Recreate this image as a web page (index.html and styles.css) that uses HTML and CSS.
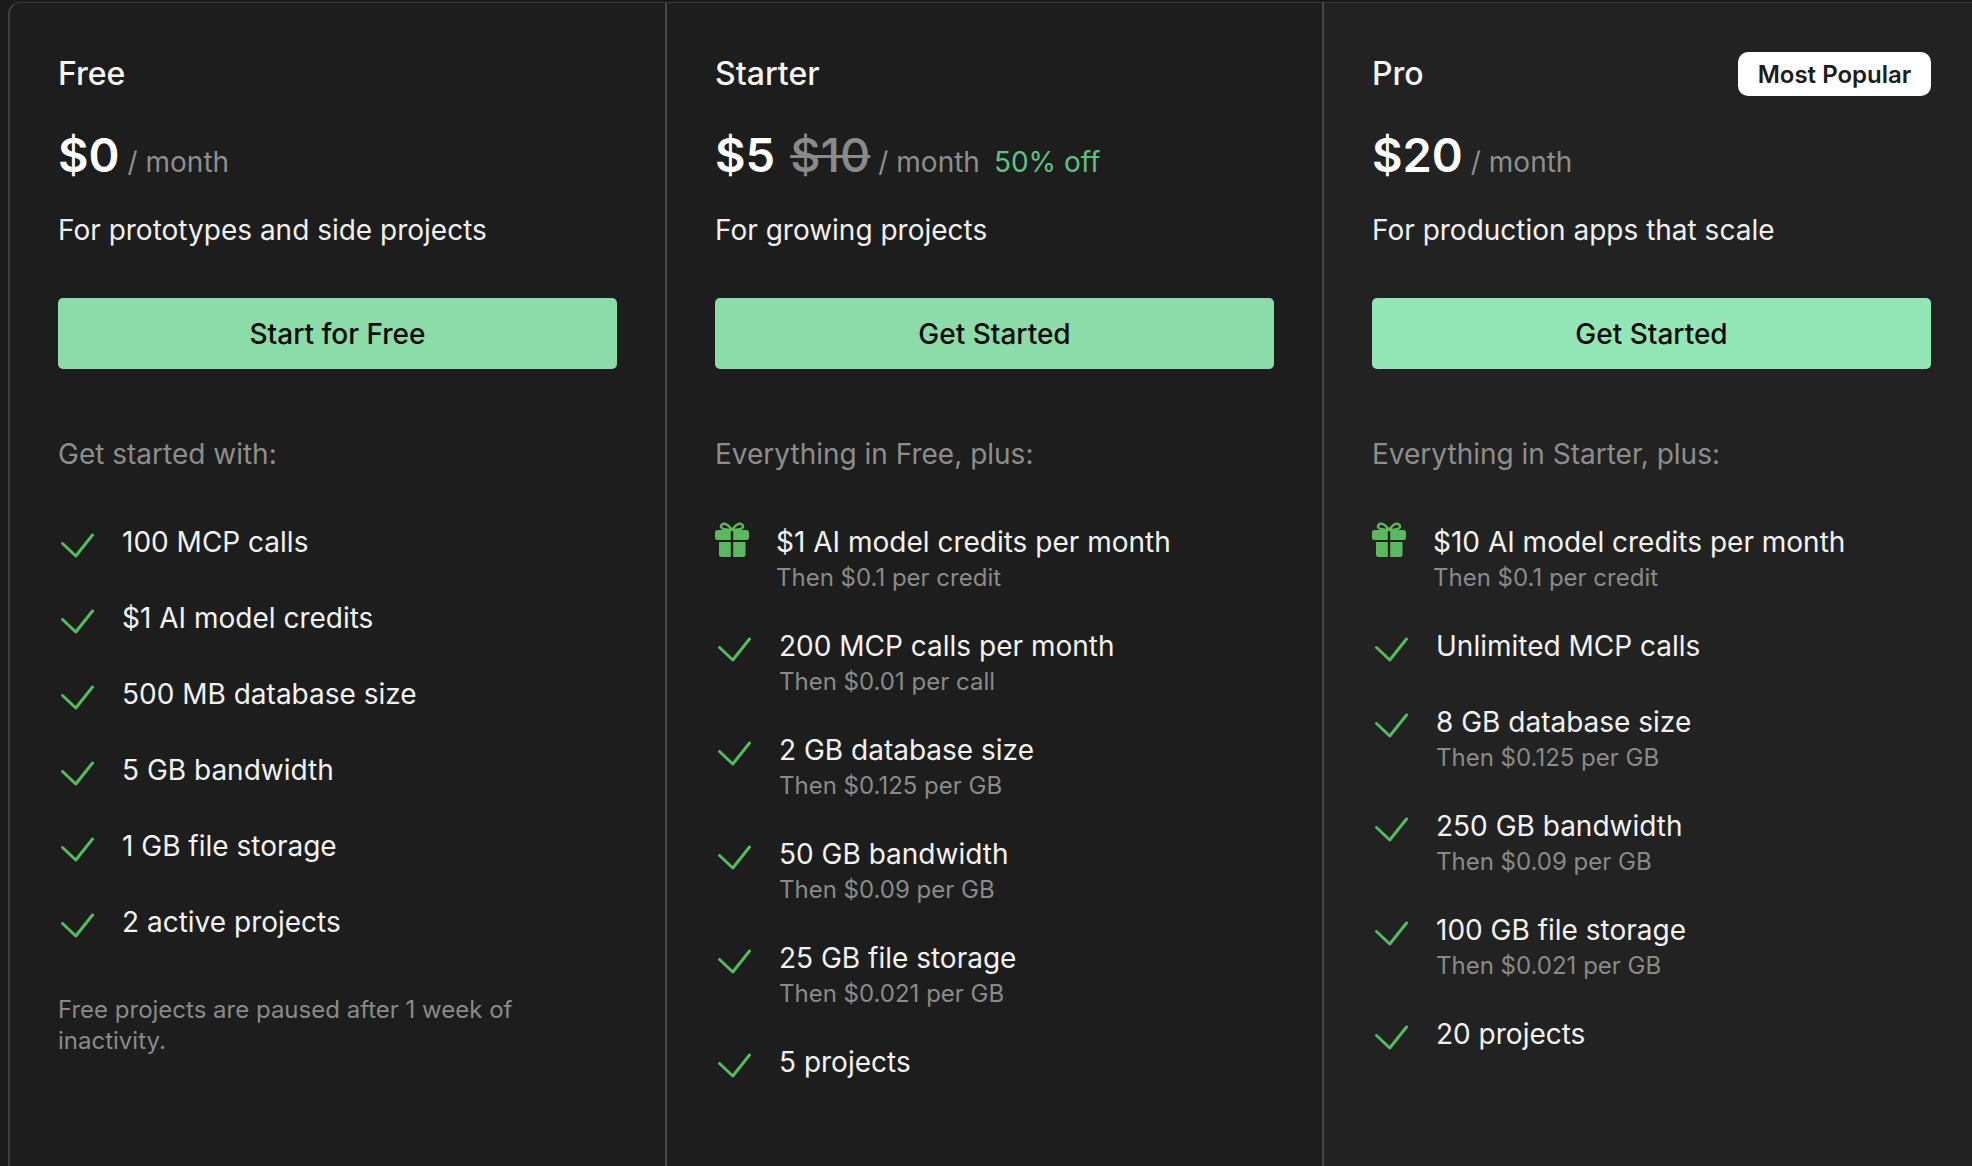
FILE: index.html
```html
<!DOCTYPE html>
<html lang="en">
<head>
<meta charset="utf-8">
<title>Pricing</title>
<link rel="stylesheet" href="styles.css">
</head>
<body>
<div class="pricing">
  <section class="plan">
    <div class="plan-head"><h2 class="plan-name">Free</h2></div>
    <div class="price-row"><span class="amount">$0</span><span class="period">/ month</span></div>
    <p class="desc">For prototypes and side projects</p>
    <button class="cta">Start for Free</button>
    <p class="label">Get started with:</p>
    <ul class="features">
      <li class="feature"><span class="icon"><svg width="36" height="40" viewBox="0 0 36 40"><path d="M4.5 21.5 L17.8 34 L34.5 13" fill="none" stroke="#52bd5a" stroke-width="3" stroke-linecap="round" stroke-linejoin="round"/></svg></span><div class="ftext"><div class="ftitle">100 MCP calls</div></div></li>
      <li class="feature"><span class="icon"><svg width="36" height="40" viewBox="0 0 36 40"><path d="M4.5 21.5 L17.8 34 L34.5 13" fill="none" stroke="#52bd5a" stroke-width="3" stroke-linecap="round" stroke-linejoin="round"/></svg></span><div class="ftext"><div class="ftitle">$1 AI model credits</div></div></li>
      <li class="feature"><span class="icon"><svg width="36" height="40" viewBox="0 0 36 40"><path d="M4.5 21.5 L17.8 34 L34.5 13" fill="none" stroke="#52bd5a" stroke-width="3" stroke-linecap="round" stroke-linejoin="round"/></svg></span><div class="ftext"><div class="ftitle">500 MB database size</div></div></li>
      <li class="feature"><span class="icon"><svg width="36" height="40" viewBox="0 0 36 40"><path d="M4.5 21.5 L17.8 34 L34.5 13" fill="none" stroke="#52bd5a" stroke-width="3" stroke-linecap="round" stroke-linejoin="round"/></svg></span><div class="ftext"><div class="ftitle">5 GB bandwidth</div></div></li>
      <li class="feature"><span class="icon"><svg width="36" height="40" viewBox="0 0 36 40"><path d="M4.5 21.5 L17.8 34 L34.5 13" fill="none" stroke="#52bd5a" stroke-width="3" stroke-linecap="round" stroke-linejoin="round"/></svg></span><div class="ftext"><div class="ftitle">1 GB file storage</div></div></li>
      <li class="feature"><span class="icon"><svg width="36" height="40" viewBox="0 0 36 40"><path d="M4.5 21.5 L17.8 34 L34.5 13" fill="none" stroke="#52bd5a" stroke-width="3" stroke-linecap="round" stroke-linejoin="round"/></svg></span><div class="ftext"><div class="ftitle">2 active projects</div></div></li>
    </ul>
    <p class="note">Free projects are paused after 1 week of inactivity.</p>
  </section>

  <section class="plan">
    <div class="plan-head"><h2 class="plan-name">Starter</h2></div>
    <div class="price-row"><span class="amount">$5</span><span class="old">$10</span><span class="period">/ month</span><span class="discount">50% off</span></div>
    <p class="desc">For growing projects</p>
    <button class="cta">Get Started</button>
    <p class="label">Everything in Free, plus:</p>
    <ul class="features">
      <li class="feature gift"><span class="icon"><svg width="34" height="40" viewBox="0 0 34 40"><g fill="#5cb85f"><path d="M2.5 8 H15.8 V18 H2.5 A2.5 2.5 0 0 1 0 15.5 V10.5 A2.5 2.5 0 0 1 2.5 8 Z"/><path d="M18.2 8 H31.5 A2.5 2.5 0 0 1 34 10.5 V15.5 A2.5 2.5 0 0 1 31.5 18 H18.2 Z"/><path d="M4 20 H15.8 V35 H6.5 A2.5 2.5 0 0 1 4 32.5 Z"/><path d="M18.2 20 H30.5 V32.5 A2.5 2.5 0 0 1 28 35 H18.2 Z"/></g><g fill="none" stroke="#5cb85f" stroke-width="2.4" stroke-linejoin="round"><path d="M17 8 C15 5.5 13 2 9.5 1.8 C7 1.7 5.5 3.5 6 5.2 C6.5 7 9 7.8 17 8"/><path d="M17 8 C19 5.5 21 2 24.5 1.8 C27 1.7 28.5 3.5 28 5.2 C27.5 7 25 7.8 17 8"/></g></svg></span><div class="ftext"><div class="ftitle">$1 AI model credits per month</div><div class="fsub">Then $0.1 per credit</div></div></li>
      <li class="feature"><span class="icon"><svg width="36" height="40" viewBox="0 0 36 40"><path d="M4.5 21.5 L17.8 34 L34.5 13" fill="none" stroke="#52bd5a" stroke-width="3" stroke-linecap="round" stroke-linejoin="round"/></svg></span><div class="ftext"><div class="ftitle">200 MCP calls per month</div><div class="fsub">Then $0.01 per call</div></div></li>
      <li class="feature"><span class="icon"><svg width="36" height="40" viewBox="0 0 36 40"><path d="M4.5 21.5 L17.8 34 L34.5 13" fill="none" stroke="#52bd5a" stroke-width="3" stroke-linecap="round" stroke-linejoin="round"/></svg></span><div class="ftext"><div class="ftitle">2 GB database size</div><div class="fsub">Then $0.125 per GB</div></div></li>
      <li class="feature"><span class="icon"><svg width="36" height="40" viewBox="0 0 36 40"><path d="M4.5 21.5 L17.8 34 L34.5 13" fill="none" stroke="#52bd5a" stroke-width="3" stroke-linecap="round" stroke-linejoin="round"/></svg></span><div class="ftext"><div class="ftitle">50 GB bandwidth</div><div class="fsub">Then $0.09 per GB</div></div></li>
      <li class="feature"><span class="icon"><svg width="36" height="40" viewBox="0 0 36 40"><path d="M4.5 21.5 L17.8 34 L34.5 13" fill="none" stroke="#52bd5a" stroke-width="3" stroke-linecap="round" stroke-linejoin="round"/></svg></span><div class="ftext"><div class="ftitle">25 GB file storage</div><div class="fsub">Then $0.021 per GB</div></div></li>
      <li class="feature"><span class="icon"><svg width="36" height="40" viewBox="0 0 36 40"><path d="M4.5 21.5 L17.8 34 L34.5 13" fill="none" stroke="#52bd5a" stroke-width="3" stroke-linecap="round" stroke-linejoin="round"/></svg></span><div class="ftext"><div class="ftitle">5 projects</div></div></li>
    </ul>
  </section>

  <section class="plan plan-pro">
    <div class="plan-head"><h2 class="plan-name">Pro</h2><span class="badge">Most Popular</span></div>
    <div class="price-row"><span class="amount">$20</span><span class="period">/ month</span></div>
    <p class="desc">For production apps that scale</p>
    <button class="cta">Get Started</button>
    <p class="label">Everything in Starter, plus:</p>
    <ul class="features">
      <li class="feature gift"><span class="icon"><svg width="34" height="40" viewBox="0 0 34 40"><g fill="#5cb85f"><path d="M2.5 8 H15.8 V18 H2.5 A2.5 2.5 0 0 1 0 15.5 V10.5 A2.5 2.5 0 0 1 2.5 8 Z"/><path d="M18.2 8 H31.5 A2.5 2.5 0 0 1 34 10.5 V15.5 A2.5 2.5 0 0 1 31.5 18 H18.2 Z"/><path d="M4 20 H15.8 V35 H6.5 A2.5 2.5 0 0 1 4 32.5 Z"/><path d="M18.2 20 H30.5 V32.5 A2.5 2.5 0 0 1 28 35 H18.2 Z"/></g><g fill="none" stroke="#5cb85f" stroke-width="2.4" stroke-linejoin="round"><path d="M17 8 C15 5.5 13 2 9.5 1.8 C7 1.7 5.5 3.5 6 5.2 C6.5 7 9 7.8 17 8"/><path d="M17 8 C19 5.5 21 2 24.5 1.8 C27 1.7 28.5 3.5 28 5.2 C27.5 7 25 7.8 17 8"/></g></svg></span><div class="ftext"><div class="ftitle">$10 AI model credits per month</div><div class="fsub">Then $0.1 per credit</div></div></li>
      <li class="feature"><span class="icon"><svg width="36" height="40" viewBox="0 0 36 40"><path d="M4.5 21.5 L17.8 34 L34.5 13" fill="none" stroke="#52bd5a" stroke-width="3" stroke-linecap="round" stroke-linejoin="round"/></svg></span><div class="ftext"><div class="ftitle">Unlimited MCP calls</div></div></li>
      <li class="feature"><span class="icon"><svg width="36" height="40" viewBox="0 0 36 40"><path d="M4.5 21.5 L17.8 34 L34.5 13" fill="none" stroke="#52bd5a" stroke-width="3" stroke-linecap="round" stroke-linejoin="round"/></svg></span><div class="ftext"><div class="ftitle">8 GB database size</div><div class="fsub">Then $0.125 per GB</div></div></li>
      <li class="feature"><span class="icon"><svg width="36" height="40" viewBox="0 0 36 40"><path d="M4.5 21.5 L17.8 34 L34.5 13" fill="none" stroke="#52bd5a" stroke-width="3" stroke-linecap="round" stroke-linejoin="round"/></svg></span><div class="ftext"><div class="ftitle">250 GB bandwidth</div><div class="fsub">Then $0.09 per GB</div></div></li>
      <li class="feature"><span class="icon"><svg width="36" height="40" viewBox="0 0 36 40"><path d="M4.5 21.5 L17.8 34 L34.5 13" fill="none" stroke="#52bd5a" stroke-width="3" stroke-linecap="round" stroke-linejoin="round"/></svg></span><div class="ftext"><div class="ftitle">100 GB file storage</div><div class="fsub">Then $0.021 per GB</div></div></li>
      <li class="feature"><span class="icon"><svg width="36" height="40" viewBox="0 0 36 40"><path d="M4.5 21.5 L17.8 34 L34.5 13" fill="none" stroke="#52bd5a" stroke-width="3" stroke-linecap="round" stroke-linejoin="round"/></svg></span><div class="ftext"><div class="ftitle">20 projects</div></div></li>
    </ul>
  </section>
</div>
</body>
</html>
```

FILE: styles.css
```css
* { box-sizing: border-box; }

html, body {
  margin: 0;
  padding: 0;
  background: #1a1a1a;
  overflow: hidden;
  height: 100%;
}

body {
  font-family: Inter, "Noto Sans", "Liberation Sans", sans-serif;
  color: #f2f2f2;
}

.pricing {
  display: grid;
  grid-template-columns: 655px 657px 657px;
  width: 1971px;
  height: 1240px;
  margin: 2px 0 0 8px;
  border-top: 1px solid #393939;
  border-left: 2px solid #404040;
  border-top-left-radius: 12px;
  background: #1d1d1d;
  overflow: hidden;
}

.plan {
  padding: 49px 48px 48px;
  display: flex;
  flex-direction: column;
}

.plan + .plan {
  border-left: 2px solid #474747;
}

.plan-pro {
  background: #222222;
}

.plan-head {
  display: flex;
  justify-content: space-between;
  align-items: center;
  height: 44px;
}

.plan-name {
  margin: 0;
  font-size: 32px;
  font-weight: 500;
  line-height: 44px;
  color: #f5f5f5;
}

.badge {
  display: inline-flex;
  align-items: center;
  justify-content: center;
  width: 193px;
  height: 44px;
  border-radius: 10px;
  background: #ffffff;
  color: #1c1c1c;
  font-size: 24px;
  font-weight: 600;
}

.price-row {
  display: flex;
  align-items: baseline;
  gap: 8px;
  margin-top: 32px;
  height: 54px;
}

.amount {
  font-size: 47px;
  font-weight: 600;
  line-height: 54px;
  color: #ffffff;
}

.old {
  margin-left: 7px;
  font-size: 47px;
  font-weight: 500;
  line-height: 54px;
  color: #8a8a8a;
  text-decoration: line-through;
  text-decoration-thickness: 3px;
}

.period {
  font-size: 28px;
  color: #8e8e8e;
}

.discount {
  margin-left: 6px;
  font-size: 28px;
  color: #5fc282;
}

.desc {
  margin: 32px 0 0;
  font-size: 28px;
  line-height: 33px;
  color: #f0f0f0;
}

.cta {
  margin-top: 51px;
  width: 100%;
  height: 71px;
  border: 0;
  border-radius: 5px;
  background: #8cdca9;
  color: #0a0a0a;
  font-family: inherit;
  font-size: 28px;
  font-weight: 500;
}

.plan-pro .cta {
  background: #93e6b6;
}

.label {
  margin: 69px 0 0;
  font-size: 28px;
  line-height: 33px;
  color: #8d8d8d;
}

.features {
  list-style: none;
  margin: 51px 0 0;
  padding: 0;
  display: flex;
  flex-direction: column;
  gap: 36px;
}

.feature {
  display: flex;
  align-items: flex-start;
  gap: 28px;
}

.feature.gift {
  gap: 27px;
}

.icon {
  flex: none;
  display: flex;
  width: 36px;
  height: 40px;
}

.feature.gift .icon {
  width: 34px;
}

.ftitle {
  font-size: 28px;
  line-height: 40px;
  color: #f2f2f2;
}

.fsub {
  margin-top: 4px;
  font-size: 24px;
  line-height: 24px;
  color: #8a8a8a;
}

.note {
  margin: 52px 0 0;
  font-size: 24px;
  line-height: 31px;
  color: #8a8a8a;
}
```
